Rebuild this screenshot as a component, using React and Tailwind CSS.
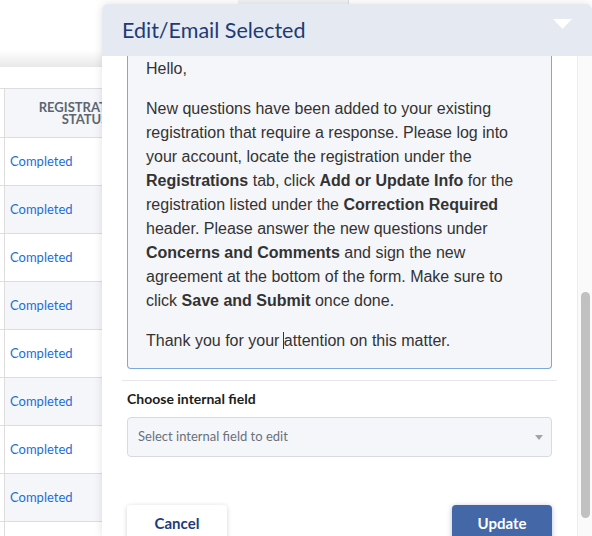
const rows = Array.from({ length: 9 });

const App = () => {
  return (
    <div className="relative w-[592px] h-[536px] overflow-hidden bg-white font-['Lato',sans-serif]">
      {/* page behind the modal */}
      <div className="h-[67px] bg-linear-to-b from-white from-75% to-[#e8e8e8]">
        <div className="ml-[238px] w-[111px] h-[6px] bg-[#f1f2f5] border-r border-[#dddddd]" />
      </div>
      <div className="h-[21px]" />
      <div className="flex h-[50px] border-y border-[#dddddd]">
        <div className="w-[5px] border-r border-[#dddddd]" />
        <div className="w-[160px] bg-[#f5f6fa] flex flex-col items-center justify-center text-[13px] leading-[12px] font-bold text-[#5b6671] uppercase">
          <span>Registration</span>
          <span>Status</span>
        </div>
        <div className="flex-1 bg-[#f5f6fa]" />
      </div>
      {rows.map((_, i) => (
        <div key={i} className={`flex h-[48px] border-b border-[#dddddd] ${i % 2 ? "bg-[#f5f6fa]" : "bg-white"}`}>
          <div className="w-[5px] border-r border-[#dddddd] bg-white" />
          <div className="flex items-center pl-[5px] text-[13px] text-[#1d6ed3]">Completed</div>
        </div>
      ))}

      {/* Edit/Email modal */}
      <div className="absolute left-[102px] top-[4px] w-[490px] h-[532px] bg-white rounded-t-[6px] shadow-[0_0_8px_rgba(0,0,0,0.12)] flex flex-col overflow-hidden">
        <div className="h-[52px] shrink-0 bg-[#e4e9f2] flex justify-between pl-[20px] pr-[20px]">
          <h2 className="self-center text-[21.5px] text-[#1f3b74]">Edit/Email Selected</h2>
          <svg width="19" height="10" viewBox="0 0 19 10" className="mt-[15px]">
            <polygon points="0,0 19,0 9.5,10" fill="#ffffff" />
          </svg>
        </div>

        <div className="flex-1 flex min-h-0">
          <div className="flex-1 px-[25px] overflow-hidden">
            <div className="border-x border-b border-[#7ba8dd] bg-[#f5f6fa] rounded-b-[4px] pt-px pl-[18px] pr-[20px] pb-[15px] font-['Liberation_Sans',sans-serif] text-[16px] leading-[24px] text-[#333333]">
              <p className="mb-4">Hello,</p>
              <p className="mb-4">
                New questions have been added to your existing registration that require a response. Please log into
                your account, locate the registration under the <b>Registrations</b> tab, click <b>Add or Update Info</b> for
                the registration listed under the <b>Correction Required</b> header. Please answer the new questions under{" "}
                <b>Concerns and Comments</b> and sign the new agreement at the bottom of the form. Make sure to click{" "}
                <b>Save and Submit</b> once done.
              </p>
              <p>
                Thank you for your <span className="border-l border-[#333333] -ml-px" />attention on this matter.
              </p>
            </div>

            <div className="mt-[11px] -mx-[5px] h-px bg-[#e6e8eb]" />

            <label className="block mt-[8px] text-[14px] leading-[20px] font-bold text-[#1c1c1c]">Choose internal field</label>
            <div className="mt-[8px] h-[40px] rounded-[4px] border border-[#d7dadf] bg-[#f5f6fa] flex items-center justify-between pl-[10px] pr-[8px]">
              <span className="text-[13px] text-[#69717b]">Select internal field to edit</span>
              <svg width="8" height="5" viewBox="0 0 8 5">
                <polygon points="0,0 8,0 4,5" fill="#a0a5ab" />
              </svg>
            </div>

            <div className="mt-[48px] flex justify-between">
              <button className="w-[100px] h-[36px] rounded-[4px] bg-white shadow-[0_1px_5px_rgba(0,0,0,0.18)] text-[15px] font-bold text-[#213c7a]">
                Cancel
              </button>
              <button className="w-[100px] h-[36px] rounded-[4px] bg-[#4467a7] shadow-[0_1px_5px_rgba(40,70,140,0.35)] text-[15px] font-bold text-white">
                Update
              </button>
            </div>
          </div>

          <div className="w-[15px] shrink-0 bg-[#fafafa] border-l border-[#ececec] pt-[236px]">
            <div className="mx-auto w-[9px] h-[226px] rounded-full bg-[#c1c1c1]" />
          </div>
        </div>
      </div>
    </div>
  );
};

export default App;
